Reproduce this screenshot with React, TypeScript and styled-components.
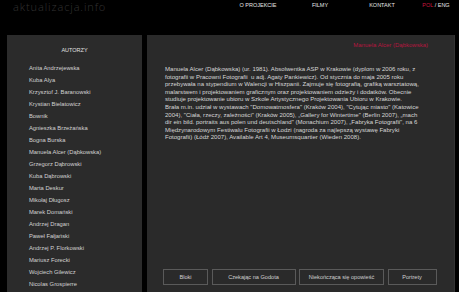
import React from "react";
import styled, { createGlobalStyle } from "styled-components";

const GlobalStyle = createGlobalStyle`
  html, body { margin: 0; padding: 0; background: #000; overflow: hidden; }
  * { box-sizing: border-box; }
`;

const Page = styled.div`
  width: 459px;
  height: 292px;
  display: flex;
  flex-direction: column;
  background: #000;
  font-family: "Liberation Sans", Arial, sans-serif;
`;

const Header = styled.header`
  height: 35px;
  display: flex;
  justify-content: space-between;
  align-items: flex-start;
  flex-shrink: 0;
`;

const Logo = styled.div`
  margin: 0 0 0 13px;
  font-family: "Open Sans", sans-serif;
  font-weight: 300;
  font-size: 11px;
  line-height: 9px;
  padding-top: 2px;
  letter-spacing: 0.9px;
  color: #333;
`;

const Nav = styled.nav`
  display: grid;
  grid-template-columns: 62px 62px 62px 46px;
  padding-top: 1px;
`;

const NavItem = styled.a`
  text-align: center;
  font-size: 5.5px;
  line-height: 8px;
  color: #e6e6e6;
  text-decoration: none;
`;

const Lang = styled.span<{ $active?: boolean }>`
  color: ${(p) => (p.$active ? "#c8163f" : "#e6e6e6")};
`;

const Main = styled.main`
  flex: 1;
  min-height: 0;
  display: flex;
  gap: 5px;
  padding: 0 4px 0 7px;
`;

const Sidebar = styled.aside`
  width: 135px;
  flex-shrink: 0;
  background: #2b2b2b;
  padding-top: 11px;
  overflow: hidden;
`;

const SidebarTitle = styled.div`
  text-align: center;
  font-size: 5.5px;
  line-height: 8px;
  color: #e0e0e0;
  margin-bottom: 8px;
`;

const AuthorList = styled.ul`
  list-style: none;
  margin: 0;
  padding: 0 0 0 22px;
`;

const Author = styled.li`
  font-size: 5.8px;
  line-height: 12px;
  color: #d2d2d2;
  white-space: nowrap;
`;

const Content = styled.section`
  flex: 1;
  background: #2a2a2a;
  display: flex;
  flex-direction: column;
  padding-bottom: 7px;
  border-right: 1px solid #333;
`;

const Title = styled.h1`
  margin: 0;
  padding: 6px 26px 0 0;
  text-align: right;
  font-size: 6px;
  line-height: 8px;
  font-weight: normal;
  color: #b5163f;
`;

const Bio = styled.p`
  margin: 17px 0 0 18px;
  font-size: 6.05px;
  line-height: 7.6px;
  color: #d6d6d6;
  white-space: nowrap;
`;

const ButtonRow = styled.div`
  margin-top: auto;
  display: flex;
  gap: 3.5px;
  padding-left: 16px;
`;

const FilmButton = styled.button<{ $w: number }>`
  width: ${(p) => p.$w}px;
  height: 16px;
  padding: 0;
  background: transparent;
  border: 1px solid #5a5a5a;
  color: #d0d0d0;
  font-family: "Liberation Sans", Arial, sans-serif;
  font-size: 5.6px;
  white-space: nowrap;
`;

const authors = [
  "Anita Andrzejewska",
  "Kuba Alya",
  "Krzysztof J. Baranowski",
  "Krystian Bielatowicz",
  "Bownik",
  "Agnieszka Brzeżańska",
  "Bogna Burska",
  "Manuela Alcer (Dąbkowska)",
  "Grzegorz Dąbrowski",
  "Kuba Dąbrowski",
  "Marta Deskur",
  "Mikołaj Długosz",
  "Marek Domański",
  "Andrzej Dragan",
  "Paweł Fałjański",
  "Andrzej P. Florkowski",
  "Mariusz Forecki",
  "Wojciech Gilewicz",
  "Nicolas Grospierre",
];

const bioLines = [
  "Manuela Alcer (Dąbkowska) (ur. 1981). Absolwentka ASP w Krakowie (dyplom w 2006 roku, z",
  "fotografii w Pracowni Fotografii\u00a0 u adj. Agaty Pankiewicz). Od stycznia do maja 2005 roku",
  "przebywała na stypendium w Walencji w Hiszpanii. Zajmuje się fotografią, grafiką warsztatową,",
  "malarstwem i projektowaniem graficznym oraz projektowaniem odzieży i dodatków. Obecnie",
  "studiuje projektowanie ubioru w Szkole Artystycznego Projektowania Ubioru w Krakowie.",
  "Brała m.in. udział w wystawach \"Domowatmosfera\" (Kraków 2004), \"Cytując miasto\" (Katowice",
  "2004), \"Ciała, rzeczy, zależności\" (Kraków 2005), „Gallery for Wintertime\" (Berlin 2007), „mach",
  "dir ein bild. portraits aus polen und deutschland\" (Monachium 2007), „Fabryka Fotografii\", na 6",
  "Międzynarodowym Festiwalu Fotografii w Łodzi (nagroda za najlepszą wystawę Fabryki",
  "Fotografii) (Łódź 2007), Available Art 4, Museumsquartier (Wieden 2008).",
];

const films = [
  { label: "Bloki", w: 45 },
  { label: "Czekając na Godota", w: 84 },
  { label: "Niekończąca się opowieść", w: 85 },
  { label: "Portrety", w: 49 },
];

export default function App() {
  return (
    <>
      <GlobalStyle />
      <Page>
        <Header>
          <Logo>aktualizacja.info</Logo>
          <Nav>
            <NavItem>O PROJEKCIE</NavItem>
            <NavItem>FILMY</NavItem>
            <NavItem>KONTAKT</NavItem>
            <NavItem>
              <Lang $active>POL</Lang> / <Lang>ENG</Lang>
            </NavItem>
          </Nav>
        </Header>
        <Main>
          <Sidebar>
            <SidebarTitle>AUTORZY</SidebarTitle>
            <AuthorList>
              {authors.map((a) => (
                <Author key={a}>{a}</Author>
              ))}
            </AuthorList>
          </Sidebar>
          <Content>
            <Title>Manuela Alcer (Dąbkowska)</Title>
            <Bio>
              {bioLines.map((line, i) => (
                <React.Fragment key={i}>
                  {line}
                  {i < bioLines.length - 1 && <br />}
                </React.Fragment>
              ))}
            </Bio>
            <ButtonRow>
              {films.map((f) => (
                <FilmButton key={f.label} $w={f.w}>
                  {f.label}
                </FilmButton>
              ))}
            </ButtonRow>
          </Content>
        </Main>
      </Page>
    </>
  );
}
